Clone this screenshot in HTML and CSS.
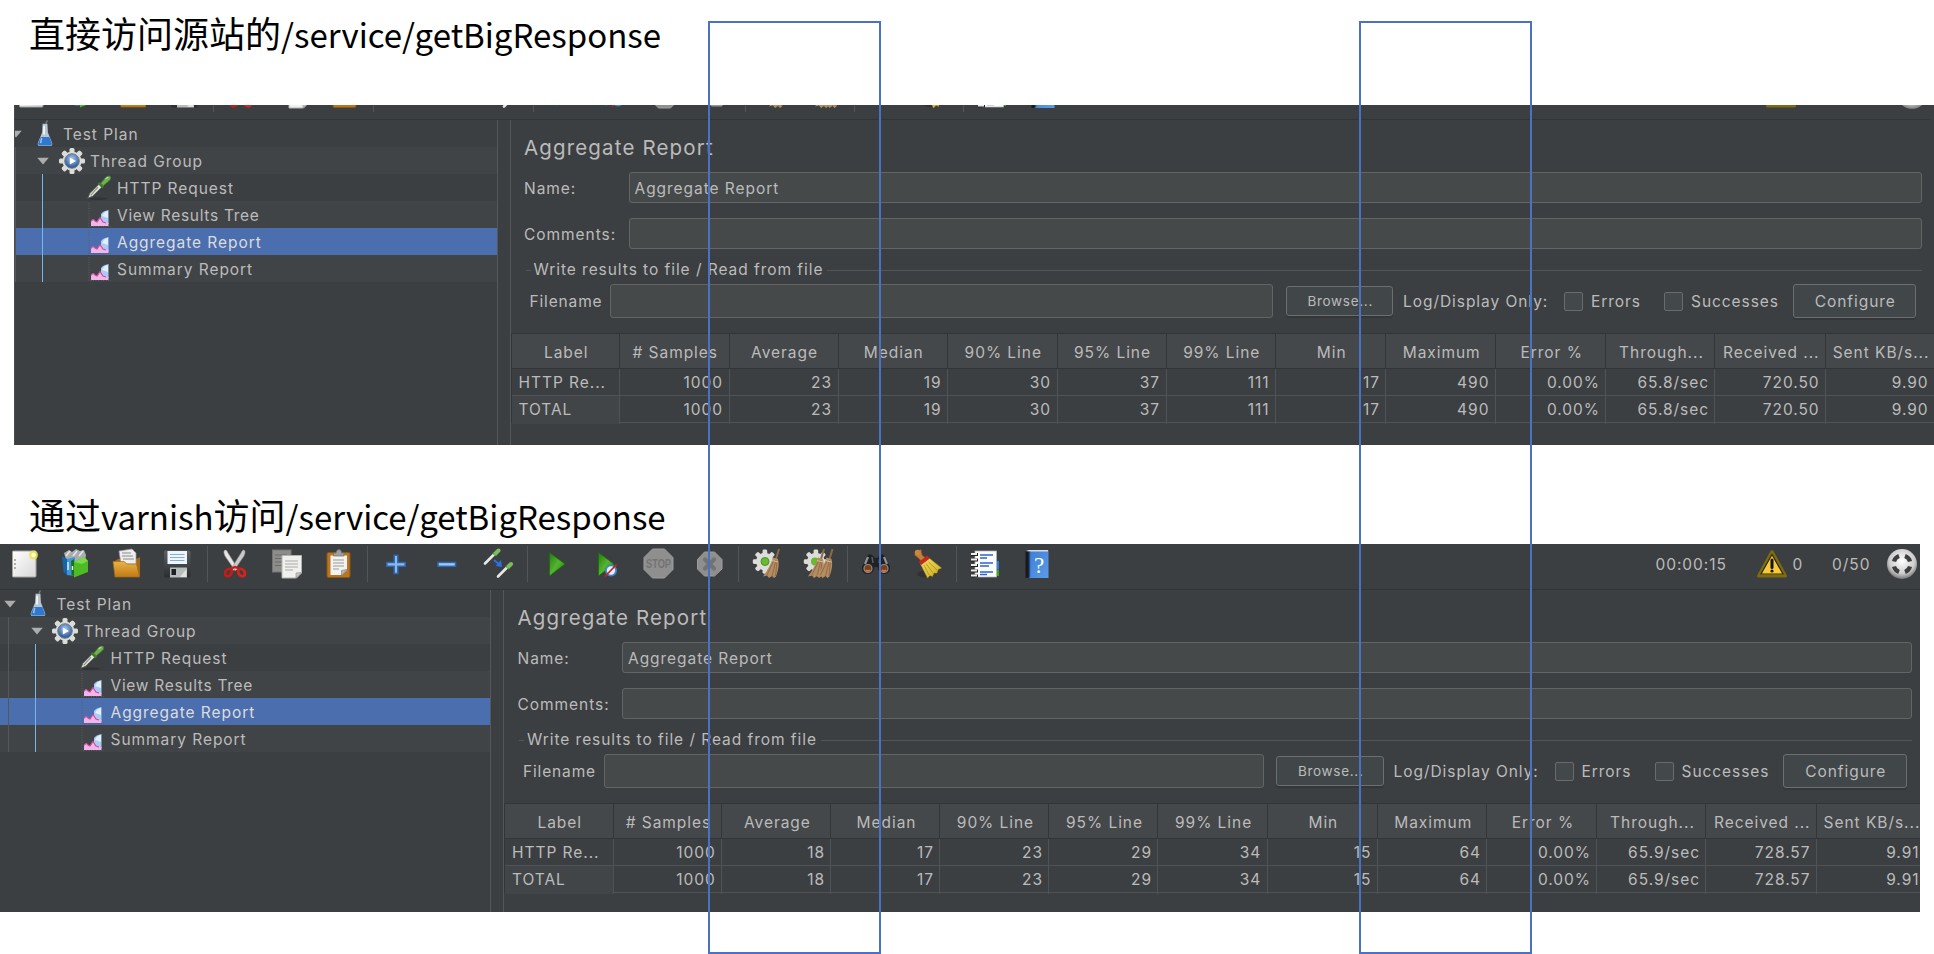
FILE: index.html
```html
<!DOCTYPE html>
<html lang="zh-CN">
<head>
<meta charset="utf-8">
<title>Aggregate Report</title>
<link rel="stylesheet" href="styles.css">
</head>
<body>
<svg class="defs" width="0" height="0" aria-hidden="true">
  <defs>
    <linearGradient id="gPaper" x1="0" y1="0" x2="1" y2="1"><stop offset="0" stop-color="#fff"/><stop offset="1" stop-color="#d8d8d8"/></linearGradient>
    <linearGradient id="gGreen" x1="0" y1="0" x2="1" y2="1"><stop offset="0" stop-color="#1f7a10"/><stop offset=".5" stop-color="#55b52e"/><stop offset="1" stop-color="#1e7d10"/></linearGradient>
    <linearGradient id="gGold" x1="0" y1="0" x2="0" y2="1"><stop offset="0" stop-color="#e9b24a"/><stop offset="1" stop-color="#c07a14"/></linearGradient>
    <linearGradient id="gFloppy" x1="0" y1="0" x2="0" y2="1"><stop offset="0" stop-color="#5c6064"/><stop offset="1" stop-color="#2b2d2f"/></linearGradient>
    <linearGradient id="gBook" x1="0" y1="0" x2="1" y2="1"><stop offset="0" stop-color="#3d7fd6"/><stop offset="1" stop-color="#5b9bea"/></linearGradient>
    <linearGradient id="gStraw" x1="0" y1="0" x2="1" y2="1"><stop offset="0" stop-color="#f4e26a"/><stop offset="1" stop-color="#c9a818"/></linearGradient>
    <radialGradient id="gBall" cx=".5" cy=".4" r=".6"><stop offset="0" stop-color="#fff"/><stop offset=".7" stop-color="#ccc"/><stop offset="1" stop-color="#777"/></radialGradient>
    <radialGradient id="gBlue" cx=".5" cy=".35" r=".65"><stop offset="0" stop-color="#a9c6ef"/><stop offset="1" stop-color="#23508f"/></radialGradient>

    <g id="dropper">
      <path d="M2 25 4 20 15 9 18 12 7 23Z" fill="#e9e9e4" stroke="#55594f" stroke-width="1"/>
      <path d="M5 22 13 13" stroke="#8d948a" stroke-width="1.4"/>
      <path d="M13.500 8.500 18.500 13.500" stroke="#3c7a2c" stroke-width="2.600"/>
      <path d="M16 9 21 3Q24 0 26 1.500 27.500 4 24.500 6.500L18.500 11.500Z" fill="#6fb14e" stroke="#4c8a35" stroke-width=".8"/>
      <path d="M21 4 24 2.500" stroke="#b4dd9c" stroke-width="1.300"/>
    </g>
    <g id="cog">
      <g fill="#dcdcd8">
        <circle cx="13" cy="13" r="9.500"/>
        <rect x="10.500" y="0" width="5" height="26" rx="1.500"/><rect x="0" y="10.500" width="26" height="5" rx="1.500"/>
        <rect x="10.500" y="0" width="5" height="26" rx="1.500" transform="rotate(45 13 13)"/><rect x="10.500" y="0" width="5" height="26" rx="1.500" transform="rotate(-45 13 13)"/>
      </g>
    </g>
    <g id="besom">
      <path d="M26 1 23 11" stroke="#8a6a48" stroke-width="2"/>
      <path d="M20 9.500 25 11Q27 18 23 28.500L21 30 19 28 16 30 14 27.500 10 28.500Q17 19 20 9.500Z" fill="#b58d62"/>
      <path d="M21 12 14 27M23 12 19 28M24 13 22.500 28" stroke="#8b6844" stroke-width=".9"/>
      <path d="M19 12.500 25 14" stroke="#dcbf97" stroke-width="1.200"/>
    </g>

    <symbol id="i-new" viewBox="0 0 32 32">
      <rect x="4.500" y="3" width="23.500" height="26" rx="1" fill="url(#gPaper)" stroke="#a3a3a0"/>
      <path d="M7 11v2M7 15v2M7 19v2" stroke="#8a8a8a" stroke-width="1.300"/>
      <circle cx="25.500" cy="7" r="4.500" fill="#f2e24c" opacity=".85"/><circle cx="25.500" cy="7" r="2.200" fill="#fffde0"/>
    </symbol>
    <symbol id="i-templates" viewBox="0 0 32 32">
      <path d="M4 5 9 2 12 4 16 1 20 3 24 2 26 7 25 14 6 12Z" fill="#a9adad"/>
      <path d="M6 8 10 3M13 8 17 3M19 8 23 3" stroke="#e4e6e6" stroke-width="1.600"/>
      <path d="M2 8 7 11V27L3.500 24Z" fill="#1763a8"/><path d="M7 11 15 9V28L7 27Z" fill="#3d96dc"/><path d="M8 14v8" stroke="#d8edfb" stroke-width="1.500"/>
      <path d="M11 13 14 11V28L11.500 27Z" fill="#1e7013"/><path d="M14 14 24 9 28 13V24L14 29.500Z" fill="#4dbb25"/><path d="M14 14 24 9 28 13 22 16Z" fill="#7ad84d"/><path d="M12.500 18v4" stroke="#e2f8d8" stroke-width="1.500"/>
    </symbol>
    <symbol id="i-open" viewBox="0 0 32 32">
      <path d="M4 13 7 11H25L29 9V28H4Z" fill="#a56a18"/>
      <path d="M8 3 21 1 25 5V16H10Z" fill="#eee" stroke="#9a9a9a" stroke-width=".7"/>
      <path d="M11 5h9M11 8h11M12 11h11" stroke="#8a8a8a" stroke-width="1"/>
      <path d="M2 13.500H13L16 16H25.500L28.500 29H4Z" fill="url(#gGold)" stroke="#a86c14" stroke-width=".7"/>
    </symbol>
    <symbol id="i-save" viewBox="0 0 32 32">
      <rect x="2" y="2.500" width="26.500" height="27" rx="1.500" fill="url(#gFloppy)"/>
      <rect x="5.500" y="3" width="19.500" height="13" fill="#eef5fb"/>
      <path d="M8 6.500h14.500M8 9.500h14.500M8 12.500h14.500" stroke="#86aed3" stroke-width="1.200"/>
      <rect x="8" y="19.500" width="17" height="10" fill="#b9bcbd"/><rect x="9.500" y="21" width="4.500" height="6" fill="#1d1f20"/><path d="M18 29 24.500 21V29Z" fill="#dfe1e2"/>
    </symbol>
    <symbol id="i-cut" viewBox="0 0 32 32">
      <path d="M4 3Q6 0 8 5L18 21 15 22.500 5 8Q3.500 5 4 3Z" fill="#e6e6e4" stroke="#999" stroke-width=".6"/>
      <path d="M25 3Q23 0 21 5L11 21 14 22.500 24 8Q25.500 5 25 3Z" fill="#c9cac9" stroke="#8c8c8c" stroke-width=".6"/>
      <ellipse cx="8.500" cy="24.500" rx="3" ry="4" transform="rotate(35 8.500 24.500)" fill="none" stroke="#c81b16" stroke-width="2.800"/>
      <ellipse cx="21.500" cy="24.500" rx="3" ry="4" transform="rotate(-35 21.500 24.500)" fill="none" stroke="#d9221c" stroke-width="2.800"/>
      <path d="M10 21 15 19 20 21" fill="none" stroke="#c81b16" stroke-width="2.400"/>
    </symbol>
    <symbol id="i-copy" viewBox="0 0 32 32">
      <rect x="1.500" y="2" width="18.500" height="22" fill="#8d8e8c" stroke="#747573"/>
      <path d="M4 7h12M4 10.500h12M4 14h7M4 17.500h7" stroke="#6b6c6a"/>
      <path d="M11 7.500H30.500V25L25.500 30H11Z" fill="#f0f0ee" stroke="#b3b3b0"/>
      <path d="M14 13h13M14 16h13M14 19h13M14 22h8" stroke="#a8a8a6"/><path d="M30 24.500 25 25 25 30Z" fill="#c7c7c4" stroke="#8d8d8a" stroke-width=".6"/>
    </symbol>
    <symbol id="i-paste" viewBox="0 0 32 32">
      <rect x="4" y="4.500" width="23" height="25" rx="1.500" fill="#b87620" stroke="#8b5613"/>
      <path d="M7.500 7.500H24V22L19 27H7.500Z" fill="#f2f2f0"/>
      <path d="M10 12h11M10 15h11M10 18h11M10 21h6" stroke="#9b9b99"/><path d="M24 21.500 18.500 22.500 18.500 27.500Z" fill="#bcbcb9" stroke="#777" stroke-width=".6"/>
      <path d="M10.500 8V5H13Q13.500 1.500 16 1.500T18.500 5H21V8Z" fill="#9fa09c" stroke="#6f706c" stroke-width=".7"/>
    </symbol>
    <symbol id="i-plus" viewBox="0 0 32 32">
      <path d="M14.200 7.200h3.600v7.400h7.400v3.600h-7.400v7.400h-3.600v-7.400H6.800v-3.600h7.400Z" fill="#8db8ea" stroke="#2d68b5" stroke-width="1.500"/>
    </symbol>
    <symbol id="i-minus" viewBox="0 0 32 32"><rect x="7" y="14.400" width="17.500" height="3.900" fill="#a3c8f0" stroke="#2d68b5" stroke-width="1.500"/></symbol>
    <symbol id="i-toggle" viewBox="0 0 32 32">
      <path d="M2 15.500 11 6.500" stroke="#e8e8e4" stroke-width="2.600" stroke-linecap="round"/>
      <path d="M10 4.500 13.500 8" stroke="#3c7a2c" stroke-width="2"/>
      <path d="M12.500 5.500 15.500 2.500" stroke="#7dbb5c" stroke-width="4" stroke-linecap="round"/>
      <path d="M15 28.500 24 19.500" stroke="#e8e8e4" stroke-width="2.600" stroke-linecap="round"/>
      <path d="M23 17.500 26.500 21" stroke="#3c7a2c" stroke-width="2"/>
      <path d="M25.500 18.500 28 16" stroke="#7dbb5c" stroke-width="4" stroke-linecap="round"/>
      <path d="M11 12 16.500 16.500" stroke="#2f6fe0" stroke-width="2"/><path d="M19 19 12.500 18 18 12Z" fill="#2f6fe0"/>
    </symbol>
    <symbol id="i-start" viewBox="0 0 32 32"><path d="M9.500 4.500 25 16 9.500 28Z" fill="url(#gGreen)" stroke="#1a6b0e" stroke-width=".8"/></symbol>
    <symbol id="i-startnp" viewBox="0 0 32 32">
      <path d="M7.500 4.500 23 16 7.500 28Z" fill="url(#gGreen)" stroke="#1a6b0e" stroke-width=".8"/>
      <circle cx="20" cy="22.500" r="6" fill="#3e86cc"/><circle cx="20" cy="22.500" r="4.200" fill="#e8eef5"/>
      <path d="M14 28.500 25.500 16.500" stroke="#c82323" stroke-width="1.800"/>
    </symbol>
    <symbol id="i-stop" viewBox="0 0 32 32">
      <path d="M9.500 1H21.500L30 9.500V21.500L21.500 30H9.500L1 21.500V9.500Z" fill="#8f8f8f" stroke="#9c9c9c"/>
      <text x="15.500" y="20" class="icon-stop" text-anchor="middle" textLength="25" lengthAdjust="spacingAndGlyphs">STOP</text>
    </symbol>
    <symbol id="i-shutdown" viewBox="0 0 32 32">
      <path d="M10.500 4H20.500L28 11.500V21L20.500 28H10.500L3.500 21V11.500Z" fill="#8f8f8f" stroke="#9c9c9c"/>
      <path d="M11 11.500 20 20.500M20 11.500 11 20.500" stroke="#737373" stroke-width="4.200" stroke-linecap="round"/>
    </symbol>
    <symbol id="i-clear" viewBox="0 0 32 32">
      <use href="#cog" transform="translate(.8 1.500) scale(.93)"/><circle cx="13" cy="13.500" r="4" fill="#67ba32" stroke="#4b9222"/><use href="#besom" transform="translate(1 0)"/>
    </symbol>
    <symbol id="i-clearall" viewBox="0 0 32 32">
      <use href="#cog" transform="translate(.8 1.500) scale(.93)"/><circle cx="12" cy="13.500" r="4" fill="#67ba32"/><use href="#besom" transform="translate(-5 0)"/><use href="#besom" transform="translate(3.500 0)"/>
    </symbol>
    <symbol id="i-search" viewBox="0 0 32 32">
      <path d="M7 8Q9 5 12 7L15 10H17L20 7Q23 5 25 8L30 19Q31 26 24 26 18.500 26 17.500 19H14.500Q13.500 26 8 26 1 26 2 19Z" fill="#1f2122"/>
      <path d="M8 9 5 16M24 9 27 16" stroke="#8f9496" stroke-width="2.200"/><path d="M12 9 13 15M20 9 19 15" stroke="#5c6062" stroke-width="1.500"/>
      <circle cx="8" cy="20.500" r="4" fill="#7f3d17" stroke="#8c9092" stroke-width="1.200"/><circle cx="24" cy="20.500" r="4" fill="#7f3d17" stroke="#8c9092" stroke-width="1.200"/>
      <path d="M6 22Q8 24 10 22M22 22Q24 24 26 22" stroke="#d98345" stroke-width="1.500" fill="none"/>
    </symbol>
    <symbol id="i-broom" viewBox="0 0 32 32">
      <ellipse cx="14" cy="26" rx="9" ry="3.500" fill="#2c2e2f" opacity=".7"/>
      <path d="M4.500 3.500 9 1.500 10 7 14 10.500 10 14 6.500 10 2.500 7Z" fill="#c3803b" stroke="#8f5820" stroke-width=".7"/><circle cx="5.500" cy="4.500" r="2.700" fill="#c98743"/>
      <path d="M8.500 16 17 10 29.500 20 26 21.500 25 25 22 25 20.500 28.500 18 27.500 15.500 30Z" fill="url(#gStraw)" stroke="#b39412" stroke-width=".5"/>
      <path d="M12 17 17 27M14 15.500 21 25M16.500 14 25 22" stroke="#b6951a" stroke-width=".9"/>
      <path d="M8 15.500 16.500 9" stroke="#c5281c" stroke-width="4"/>
    </symbol>
    <symbol id="i-function" viewBox="0 0 32 32">
      <path d="M26 13h4v8h-4Z" fill="#2f7fd8"/><path d="M26 21.500h4V28h-4Z" fill="#3fa321"/>
      <rect x="6" y="3" width="21.500" height="26" fill="#fbfbfb" stroke="#b5b5b5" stroke-width=".7"/>
      <path d="M11 7h13M11 10h7M11 15h13M11 18h9M11 24h13M11 26.500h7" stroke="#2d66cf" stroke-width="1.300"/>
      <path d="M2 6.500h7M2 12h7M2 17.500h7M2 23h7M2 28h7" stroke="#202222" stroke-width="3"/><path d="M2 6h6M2 11.500h6M2 17h6M2 22.500h6M2 27.500h6" stroke="#eee" stroke-width="1.800"/>
    </symbol>
    <symbol id="i-help" viewBox="0 0 32 32">
      <path d="M4.500 3 8 2V29.500L4.500 30Z" fill="#17191b"/><path d="M8 2.500H27.500V30H8Z" fill="url(#gBook)"/><path d="M4.500 3 8 2H27V3.500H8Z" fill="#d8dadb"/><path d="M8.500 3.500V29.500" stroke="#1f4c8f" stroke-width="1.500"/>
      <text x="18" y="25" class="icon-help" text-anchor="middle">?</text>
    </symbol>
    <symbol id="i-warn" viewBox="0 0 32 32">
      <path d="M16 3.500 29.500 28H2.500Z" fill="#f0c62f" stroke="#7d6b10" stroke-width="3" stroke-linejoin="round"/>
      <path d="M16 6.500 27 26H5Z" fill="#f6ca3c" stroke="#2a2608" stroke-width="1.200" stroke-linejoin="round"/>
      <path d="M16 12v7.500" stroke="#151408" stroke-width="3" stroke-linecap="round"/><circle cx="16" cy="23" r="1.600" fill="#151408"/>
    </symbol>
    <symbol id="i-reticle" viewBox="0 0 32 32">
      <circle cx="16" cy="16" r="15" fill="url(#gBall)"/>
      <g fill="none" stroke="#3c3f41" stroke-width="4.200"><path d="M8 13.500Q9 9.500 13 8"/><path d="M19 8Q23 9.500 24 13.500"/><path d="M24 18.500Q23 22.500 19 24"/><path d="M13 24Q9 22.500 8 18.500"/></g>
    </symbol>

    <symbol id="t-arrow" viewBox="0 0 12 12"><path d="M.3 2.700H11.700L6 9.600Z" fill="#adadad"/></symbol>
    <symbol id="t-flask" viewBox="0 0 26 28">
      <path d="M14 3.500 15.500 .5" stroke="#777b7d" stroke-width="1.500"/>
      <path d="M10.500 4H15.500L16 13 20.500 24Q21 27 18 27H8Q5 27 5.500 24L10 13Z" fill="#b9c6d0"/>
      <path d="M12 6V15" stroke="#eef3f6" stroke-width="2"/>
      <path d="M8.500 17.500H17.500L20 24Q20.500 26.500 18 26.500H8Q5.500 26.500 6 24Z" fill="#2f78cf"/><path d="M9.500 18.500 8.500 24" stroke="#9cc7f2" stroke-width="1.500"/>
    </symbol>
    <symbol id="t-gear" viewBox="0 0 26 26"><use href="#cog"/><circle cx="13" cy="13" r="7.300" fill="url(#gBlue)" stroke="#6d7d90"/><path d="M10.800 9.500 17 13 10.800 16.500Z" fill="#fff"/></symbol>
    <symbol id="t-dropper" viewBox="0 0 28 28"><ellipse cx="13" cy="25.500" rx="10" ry="1.500" fill="#313436"/><use href="#dropper"/></symbol>
    <symbol id="t-chart" viewBox="0 0 26 26">
      <path d="M3 1V24.500H25" fill="none" stroke="#5c5f61" stroke-dasharray="1 1.500"/>
      <path d="M15 22V12Q17 9 22.500 8V22Z" fill="#a9cbf5"/><path d="M16 14Q18 9.500 22 9V16Z" fill="#e2effd"/>
      <path d="M5 24V19Q7 16 9 19L11 20 14 16 17 19.500 22.500 21V24Z" fill="#f0b5ea"/><path d="M5 19.500Q7 16 9 19L11 20 14 15.500 17 20 20 21" fill="none" stroke="#cf4d9c" stroke-width="1.200"/>
    </symbol>
  </defs>
</svg>

<h1 class="caption caption-origin">直接访问源站的<span class="latin">/service/getBigResponse</span></h1>
<section class="window window-origin" id="origin"></section>
<h1 class="caption caption-varnish">通过<span class="latin">varnish</span>访问<span class="latin">/service/getBigResponse</span></h1>
<section class="window window-varnish" id="varnish"></section>

<div class="marker marker-samples"></div>
<div class="marker marker-min"></div>
<script src="app.js"></script>
</body>
</html>
```

FILE: styles.css
```css
* { box-sizing: border-box; }
body {
  margin: 0;
  width: 1934px;
  height: 954px;
  overflow: hidden;
  position: relative;
  background: #fff;
  color: #bbb;
  font: 15.5px/20px Inter, "Liberation Sans", sans-serif;
  letter-spacing: .95px;
}
.defs { position: absolute; }

.caption {
  margin: 0;
  padding-left: 29px;
  color: #000;
  font: 400 36px/52px "Noto Sans CJK SC", sans-serif;
  letter-spacing: 0;
  white-space: nowrap;
}
.caption .latin { font-size: 33px; }
.caption-origin { height: 105px; padding-top: 6px; }
.caption-varnish { height: 99px; padding-top: 43px; }

.window { background: #3c3f41; overflow: hidden; }
.window-origin { margin-left: 14px; height: 340px; border-left: 1px solid #4a4d4f; }
.window-varnish { width: 1920px; height: 368px; }
.window-origin .frame { margin: -31px 0 0 -8.500px; width: 1923px; height: 371px; }
.window-varnish .frame { width: 1920px; height: 368px; }
.window-origin { --cols: 108.500px 109.500px 109px 109.500px 109.500px 109px 109.400px 110.600px 109.400px 110.600px 109px 110.600px 109px; }
.window-varnish { --cols: 108.500px 108.800px 109.200px 109px 109px 109px 109.200px 110.300px 109.500px 110px 109px 110.500px 109px; }
.frame { display: flex; flex-direction: column; }

.toolbar {
  flex: none;
  height: 46px;
  display: flex;
  padding-bottom: 5px;
  align-items: center;
  border-bottom: 1px solid #323537;
}
.tools { display: flex; align-items: center; margin-left: -1.500px; }
.tool { width: 51.400px; height: 32px; display: flex; justify-content: center; }
.tool svg { width: 32px; height: 32px; }
.sep { width: 6px; height: 36px; display: flex; justify-content: center; }
.sep::before { content: ""; width: 1px; background: #555; }
.icon-stop { font: 700 12px "Liberation Sans", sans-serif; fill: #747474; letter-spacing: 0; }
.icon-help { font: 400 23px "Liberation Serif", serif; fill: #fff; letter-spacing: 0; }
.status { margin-left: auto; display: flex; align-items: center; padding-right: 2px; }
.status svg { width: 32px; height: 32px; display: block; }
.status span { padding-top: 1px; }
.clock { width: 100px; }
.status .errors { width: 44.500px; padding-left: 5px; }
.threads { width: 54px; }

.content { flex: 1; display: flex; min-height: 0; }
.tree { width: 491px; flex: none; border-right: 1px solid #55585a; position: relative; }
.node { height: 27px; display: flex; align-items: center; background: #3c3f41; }
.node:nth-child(even) { background: #414446; }
.node:last-of-type { background: #414446; }
.node.selected { background: #4b6eaf; color: #dcdcdc; }
.node .arrow { width: 12px; height: 12px; margin-right: 9.500px; }
.node .glyph { width: 26px; height: 26px; margin-right: 5.500px; }
.node .glyph-flask { height: 27px; }
.node span { padding-top: 2px; }
.node .glyph-chart + .tight { letter-spacing: .7px; }
.depth0 { padding-left: 3.500px; }
.depth1 { padding-left: 30.500px; }
.depth2 { padding-left: 79px; }
.window-origin .node { padding-right: 0; }
.guide { position: absolute; bottom: auto; width: 1px; }
.guide-root { left: 8px; top: 27px; height: 135px; background: #55585a; }
.guide-group { left: 35px; top: 54px; height: 108px; background: #74b8ea; }

.main { flex: 1; margin-left: 12px; border-left: 1px solid #55585a; min-width: 0; }
.title { margin: 0; height: 52px; padding: 2px 0 0 13.500px; font-size: 20.500px; font-weight: 400; line-height: 52px; letter-spacing: 1.150px; }
.row { display: flex; align-items: center; height: 31px; padding: 0 8px 0 13px; margin-bottom: 15px; }
.row .label { width: 105px; padding: 2px 0 0 .5px; }
.field { height: 100%; flex: 1; display: flex; align-items: center; padding: 2px 0 0 5px; background: #45494a; border: 1px solid #646464; border-radius: 3px; }
.legend { display: flex; align-items: center; gap: 4px; height: 20px; margin: -4px 8px 0 15px; }
.legend::before, .legend::after { content: ""; height: 1px; background: #555; }
.legend::before { width: 5px; margin-right: -1px; }
.legend::after { flex: 1; }
.file { display: flex; align-items: center; height: 34px; padding: 0 13.500px 0 19px; margin-top: 4px; }
.file > * { flex: none; white-space: nowrap; }
.file > span { padding-top: 2px; }
.file .label { width: 80.500px; letter-spacing: .85px; }
.file .field { flex: 1; }
.button { border: 1px solid #6b6f70; border-radius: 3px; background: #414749; box-shadow: 0 2px 1px #34373a; text-align: center; }
.browse { width: 107.500px; height: 30px; margin: 0 10px 0 12.500px; padding-left: 2px; font-size: 13.500px; line-height: 29px; letter-spacing: .7px; }
.configure { width: 123.500px; height: 34px; padding-left: 2px; line-height: 34px; }
.only { width: 161px; }
.check { width: 19px; height: 19px; border: 1px solid #6b6b6b; border-radius: 2px; background: #43494a; margin-right: 8px; }
.errors-label { width: 73px; }
.success-label { width: 101.500px; }

.table { margin-top: 15px; border-left: 1px solid #333638; }
.tr { display: grid; grid-template-columns: var(--cols); width: max-content; height: 27px; white-space: nowrap; border-bottom: 1px solid #505355; }
.tr > * { border-right: 1px solid #505355; line-height: 28px; text-align: right; padding-right: 5.500px; }
.tr > :first-child { text-align: left; padding-left: 7px; }
.tr.total > :first-child { background: #414547; }
.tr.head { height: 36px; background: #45484a; border-top: 1px solid #323537; border-bottom-color: #323537; }
.tr.head > *, .tr.head > :first-child { border-color: #333638; line-height: 36px; text-align: center; padding: 1px 0 0 2px; }

.marker { position: absolute; top: 21px; width: 173px; height: 933px; border: 2px solid #4a72c4; }
.marker-samples { left: 708px; }
.marker-min { left: 1359px; }
```

FILE: app.js
```js
const TOOLS = [
  ["new", "templates", "open", "save"],
  ["cut", "copy", "paste"],
  ["plus", "minus", "toggle"],
  ["start", "startnp", "stop", "shutdown"],
  ["clear", "clearall"],
  ["search", "broom"],
  ["function", "help"]
];
const HEAD = ["Label", "# Samples", "Average", "Median", "90% Line", "95% Line", "99% Line", "Min", "Maximum", "Error %", "Through...", "Received ...", "Sent KB/s..."];
const NODES = [
  [0, "flask", "Test Plan"],
  [1, "gear", "Thread Group"],
  [2, "dropper", "HTTP Request"],
  [2, "chart", "View Results Tree"],
  [2, "chart", "Aggregate Report"],
  [2, "chart", "Summary Report"]
];

const icon = (id, cls = "") => `<svg class="${cls}"><use href="#${id}"/></svg>`;
const cells = (list) => list.map((c) => `<span>${c}</span>`).join("");

function node([depth, glyph, text]) {
  const arrow = depth < 2 ? icon("t-arrow", "arrow") : "";
  const selected = text === "Aggregate Report" ? " selected" : "";
  const tight = text.endsWith("Tree") ? "tight" : "";
  return `<div class="node depth${depth}${selected}">${arrow}${icon("t-" + glyph, "glyph glyph-" + glyph)}<span class="${tight}">${text}</span></div>`;
}

function render(id, status, values) {
  const groups = TOOLS.map((g) => g.map((t) => `<div class="tool">${icon("i-" + t)}</div>`).join(""));
  document.getElementById(id).innerHTML = `
  <div class="frame">
    <div class="toolbar">
      <div class="tools">${groups.join('<div class="sep"></div>')}</div>
      <div class="status"><span class="clock">${status.clock}</span>${icon("i-warn")}<span class="errors">${status.errors}</span><span class="threads">${status.threads}</span>${icon("i-reticle")}</div>
    </div>
    <div class="content">
      <div class="tree">${NODES.map(node).join("")}<i class="guide guide-root"></i><i class="guide guide-group"></i></div>
      <div class="main">
        <h2 class="title">Aggregate Report</h2>
        <div class="row"><span class="label">Name:</span><div class="field">Aggregate Report</div></div>
        <div class="row"><span class="label">Comments:</span><div class="field"></div></div>
        <div class="legend">Write results to file / Read from file</div>
        <div class="file">
          <span class="label">Filename</span><div class="field"></div>
          <div class="button browse">Browse...</div>
          <span class="only">Log/Display Only:</span>
          <i class="check"></i><span class="errors-label">Errors</span>
          <i class="check"></i><span class="success-label">Successes</span>
          <div class="button configure">Configure</div>
        </div>
        <div class="table">
          <div class="tr head">${cells(HEAD)}</div>
          <div class="tr">${cells(["HTTP Re...", ...values])}</div>
          <div class="tr total">${cells(["TOTAL", ...values])}</div>
        </div>
      </div>
    </div>
  </div>`;
}

render("origin", { clock: "", errors: "", threads: "" },
  ["1000", "23", "19", "30", "37", "111", "17", "490", "0.00%", "65.8/sec", "720.50", "9.90"]);
render("varnish", { clock: "00:00:15", errors: "0", threads: "0/50" },
  ["1000", "18", "17", "23", "29", "34", "15", "64", "0.00%", "65.9/sec", "728.57", "9.91"]);
```
